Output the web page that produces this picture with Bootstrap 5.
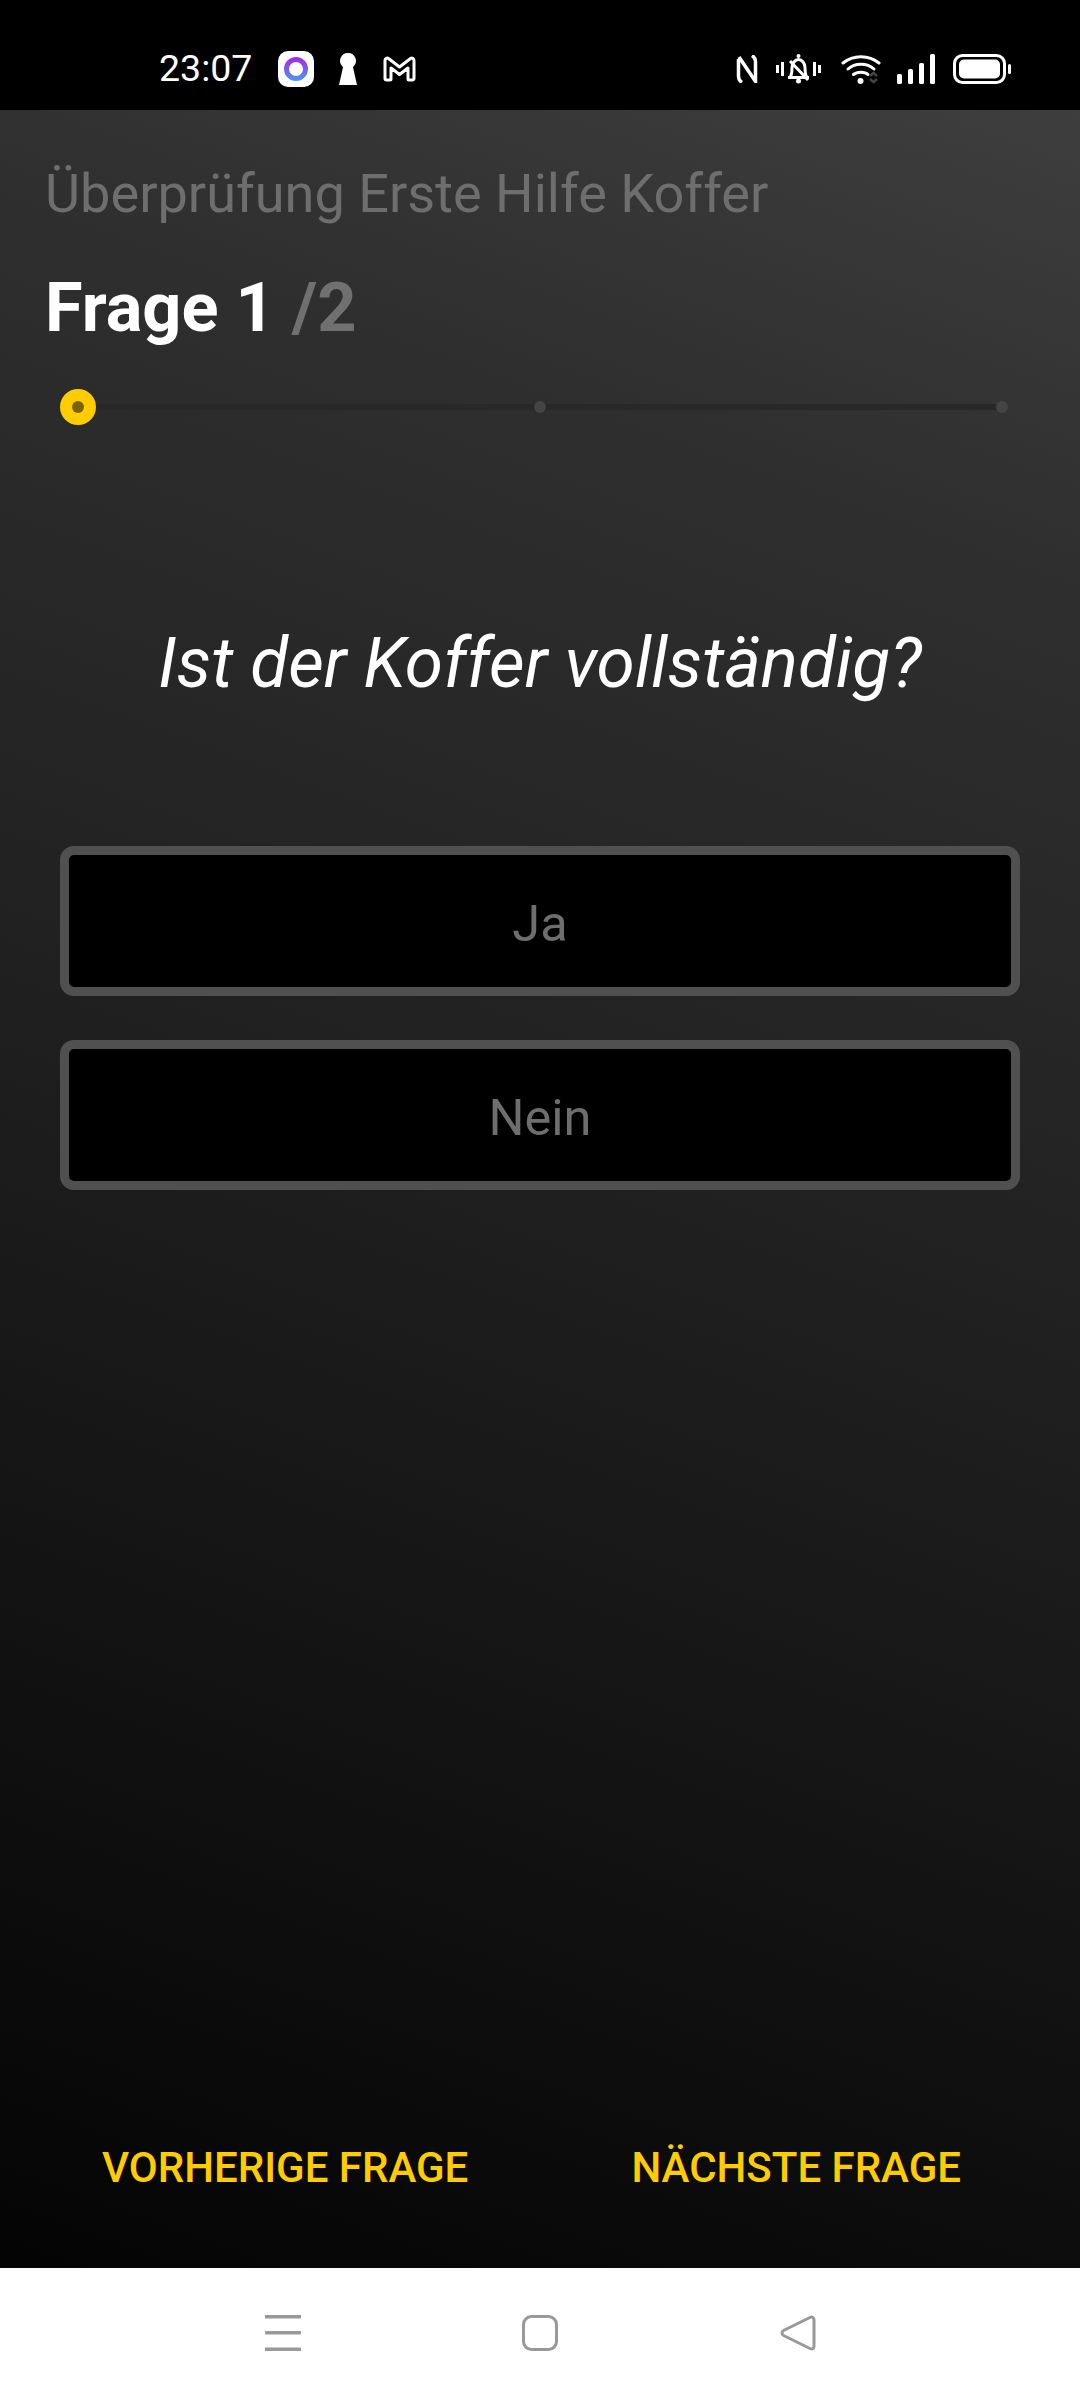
<!DOCTYPE html>
<html lang="de">
<head>
<meta charset="utf-8">
<title>Überprüfung Erste Hilfe Koffer</title>
<link rel="stylesheet" href="https://cdn.jsdelivr.net/npm/bootstrap@5.3.0/dist/css/bootstrap.min.css">
<style>
html,body{margin:0;background:#000}
body{font-family:Roboto,"Liberation Sans",sans-serif}
.phone{width:1080px;height:2400px}
.statusbar{height:110px;background:#000;color:#fff;padding:28px 0 0 159px;flex:none}
.clock{font-size:37.500px;font-weight:400;line-height:1;width:91px;margin-right:28px;white-space:nowrap}
.ico{display:block;flex:none}
.ml-keyhole{margin-left:25px}
.ml-m{margin-left:26px}
.ml-bell{margin-left:18px}
.ml-wifi{margin-left:20px}
.ml-signal{margin-left:15px}
.ml-batt{margin-left:18px;margin-right:69px}
.screen{background:linear-gradient(200deg,#3e3e3e 0%,#2f2f2f 18%,#222 45%,#040404 100%);min-height:0}
.survey-title{font-size:54.100px;line-height:64px;color:#6e6e6e;margin:0;padding:52px 0 0 45px;font-weight:400}
.qcount{font-size:68.500px;line-height:80px;font-weight:700;color:#fff;margin:0;padding:42px 0 0 45px}
.qtotal{color:#707070}
.stepper{margin:41px 60px 0;height:36px;background:linear-gradient(#282828,#282828) left center/calc(100% - 18px) 6px no-repeat}
.stepbox{width:36px;height:36px}
.stepcur{width:36px;height:36px;background:#ffcc00}
.stepcur::after{content:"";width:12px;height:12px;border-radius:50%;background:#7a6200}
.stepdot{width:12px;height:12px;background:#444}
.question{font-size:69.300px;line-height:80px;font-style:italic;font-weight:400;color:#fff;text-align:center;margin:0;padding-top:199px}
.answers{margin:0 60px;padding-top:142px;gap:44px}
.answer{height:150px;background:#000;border:9px solid #505050;border-radius:14px;color:#6e6e6e;font-size:50.500px;line-height:1;padding:6px 0 0}
.answer:hover{background:#000;color:#6e6e6e;border-color:#505050}
.pager{padding:0 119px 75px 102px;flex:none;margin-top:auto}
.pager span{color:#ffcc00;font-size:42px;line-height:50px;font-weight:500;white-space:nowrap}
.navbar-sys{height:132px;background:#fff;flex:none;padding-bottom:2px}
.navwrap{width:551px;margin:0 auto}
</style>
</head>
<body>
<div class="phone d-flex flex-column">
  <div class="statusbar d-flex align-items-center">
    <span class="clock">23:07</span>
    <svg class="ico" width="36" height="36" viewBox="0 0 36 36"><defs><linearGradient id="ringg" x1="0" y1="0" x2="0" y2="1"><stop offset="0" stop-color="#a32fe0"/><stop offset="1" stop-color="#4f8dfb"/></linearGradient></defs><rect width="36" height="36" rx="10" fill="#fff"/><circle cx="18" cy="18" r="9.5" fill="none" stroke="url(#ringg)" stroke-width="5"/></svg>
    <svg class="ico ml-keyhole" width="18" height="32" viewBox="0 0 18 32"><path d="M9 0a8 8 0 0 1 5 14.200L18 32H0L4 14.200A8 8 0 0 1 9 0z" fill="#fff"/></svg>
    <svg class="ico ml-m" width="33" height="26" viewBox="0 0 33 26"><path d="M2 4.500C2 2.500 4 1.400 5.500 2.500L16.500 11 27.500 2.500C29 1.400 31 2.500 31 4.500V22.500a1.500 1.500 0 0 1-1.500 1.500H26a1 1 0 0 1-1-1V12L16.500 18.500 8 12V23a1 1 0 0 1-1 1H3.500A1.500 1.500 0 0 1 2 22.500z" fill="none" stroke="#fff" stroke-width="3" stroke-linejoin="round"/></svg>
    <div class="flex-grow-1"></div>
    <svg class="ico" width="22" height="28" viewBox="0 0 22 28"><path d="M2.500 4V21.500C2.500 24 3.500 26 6 27.500M3 2L19.500 26.500V6.500C19.500 4 18.500 2 16 .5" fill="none" stroke="#fff" stroke-width="3.500"/></svg>
    <svg class="ico ml-bell" width="45" height="30" viewBox="0 0 45 30"><g fill="#fff"><rect x="0" y="11" width="3" height="8"/><rect x="5" y="8" width="3" height="14"/><rect x="37" y="8" width="3" height="14"/><rect x="42" y="11" width="3" height="8"/><circle cx="22.500" cy="27" r="2.500"/><circle cx="22.500" cy="2" r="2"/></g><path d="M12 23.500h21M14 23.500c2-3 2-5 2-10 0-4 3-8 6.500-8s6.500 4 6.500 8c0 5 0 7 2 10M14 7l18 19" fill="none" stroke="#fff" stroke-width="3"/></svg>
    <svg class="ico ml-wifi" width="41" height="30" viewBox="0 0 41 30"><g fill="none" stroke="#fff" stroke-width="3" stroke-linecap="round"><path d="M2 9C12 .5 28 .5 38 9"/><path d="M7 15C14 8.500 26 8.500 33 15"/><path d="M12.500 20.500C16 17.500 24 17.500 27 20.500"/></g><circle cx="19.500" cy="27" r="3" fill="#fff"/><path d="M29 22l3.500-3 3.500 3M29 25l3.500 3 3.500-3" fill="none" stroke="#444" stroke-width="2.500"/></svg>
    <svg class="ico ml-signal" width="38" height="30" viewBox="0 0 38 30"><g fill="#fff"><rect x="0" y="20" width="5" height="10" rx="1.500"/><rect x="11" y="15" width="5" height="15" rx="1.500"/><rect x="22" y="9" width="5" height="21" rx="1.500"/><rect x="33" y="0" width="5" height="30" rx="1.500"/></g></svg>
    <svg class="ico ml-batt" width="58" height="30" viewBox="0 0 58 30"><rect x="1.500" y="1.500" width="50" height="27" rx="8" fill="none" stroke="#fff" stroke-width="3"/><rect x="6" y="5.500" width="41" height="19" rx="5" fill="#fff"/><rect x="55" y="10" width="3" height="10" rx="1.500" fill="#fff"/></svg>
  </div>
  <main class="screen flex-grow-1 d-flex flex-column">
    <h1 class="survey-title">Überprüfung Erste Hilfe Koffer</h1>
    <h2 class="qcount">Frage 1 <span class="qtotal">/2</span></h2>
    <div class="stepper d-flex justify-content-between align-items-center">
      <div class="stepbox d-flex align-items-center justify-content-center"><span class="stepcur rounded-circle d-flex align-items-center justify-content-center"></span></div>
      <div class="stepbox d-flex align-items-center justify-content-center"><span class="stepdot rounded-circle"></span></div>
      <div class="stepbox d-flex align-items-center justify-content-center"><span class="stepdot rounded-circle"></span></div>
    </div>
    <p class="question">Ist der Koffer vollständig?</p>
    <div class="answers d-flex flex-column">
      <button type="button" class="btn answer">Ja</button>
      <button type="button" class="btn answer">Nein</button>
    </div>
    <div class="pager d-flex justify-content-between">
      <span>VORHERIGE FRAGE</span>
      <span>NÄCHSTE FRAGE</span>
    </div>
  </main>
  <div class="navbar-sys d-flex align-items-center">
    <div class="navwrap d-flex justify-content-between align-items-center">
      <svg class="ico" width="36" height="36" viewBox="0 0 36 36"><g fill="#999"><rect y="0" width="36" height="3.500"/><rect y="16" width="36" height="3.500" rx="1"/><rect y="32.500" width="36" height="3.500"/></g></svg>
      <svg class="ico" width="36" height="36" viewBox="0 0 36 36"><rect x="1.500" y="1.500" width="33" height="33" rx="8" fill="none" stroke="#999" stroke-width="3"/></svg>
      <svg class="ico" width="36" height="36" viewBox="0 0 36 36"><path d="M30 2.500C32 1.500 34 2.500 34 4.500V31.500C34 33.500 32 34.500 30 33.500L3.500 20.500C1.500 19.500 1.500 16.500 3.500 15.500z" fill="none" stroke="#999" stroke-width="3" stroke-linejoin="round"/></svg>
    </div>
  </div>
</div>
<script src="https://cdn.jsdelivr.net/npm/bootstrap@5.3.0/dist/js/bootstrap.bundle.min.js"></script>
</body>
</html>
